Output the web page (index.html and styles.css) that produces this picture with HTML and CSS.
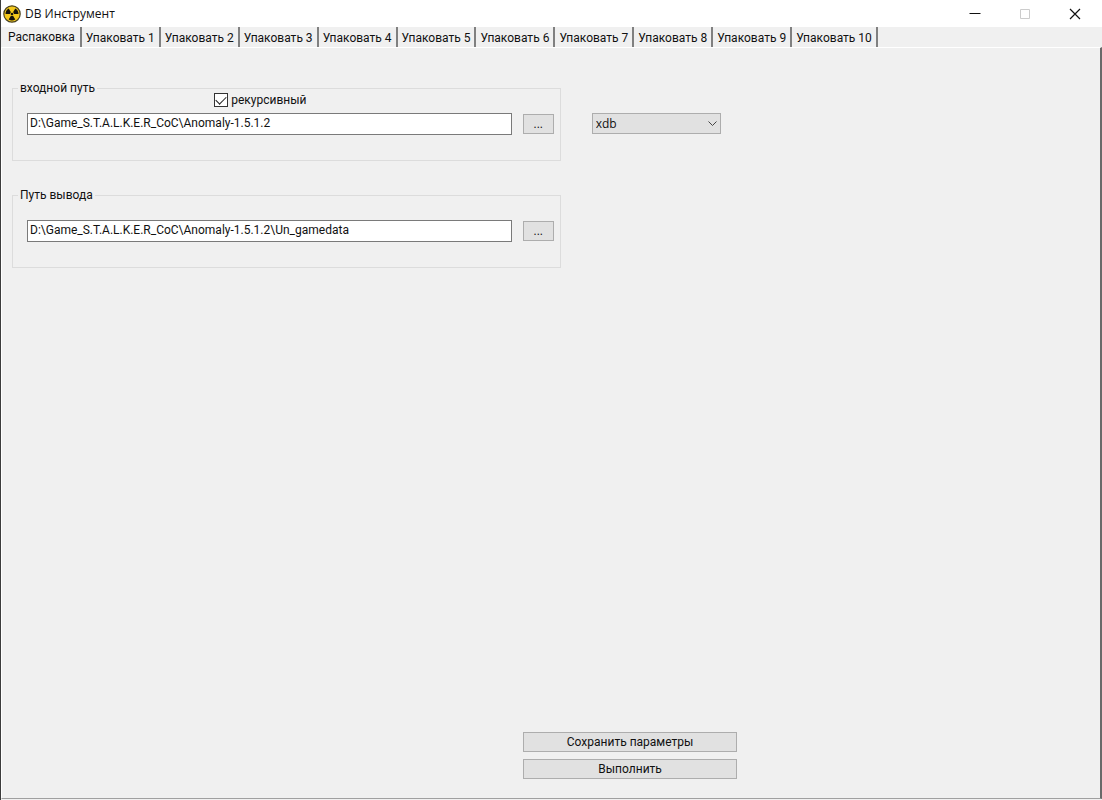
FILE: index.html
```html
<!DOCTYPE html>
<html lang="ru">
<head>
<meta charset="utf-8">
<title>DB Инструмент</title>
<link rel="stylesheet" href="styles.css">
</head>
<body>
<header class="titlebar">
  <svg class="app-icon" viewBox="0 0 18 18" aria-hidden="true">
    <circle cx="9" cy="9" r="8.2" fill="#f3c81c" stroke="#4a421f" stroke-width="1.2"/>
    <path d="M9 9L2.500 9A6.500 6.500 0 0 1 5.700 3.400ZM9 9L12.300 3.400A6.500 6.500 0 0 1 15.500 9ZM9 9L12.300 14.600A6.500 6.500 0 0 1 5.700 14.600Z" fill="#15130b"/>
    <circle cx="9" cy="9" r="2" fill="#f3c81c"/>
    <circle cx="9" cy="9" r="1.3" fill="#15130b"/>
  </svg>
  <h1 class="title">DB Инструмент</h1>
  <div class="window-buttons">
    <button class="window-button" type="button" aria-label="Свернуть"><svg viewBox="0 0 12 12"><path d="M.5 5.500h11" stroke="#111"/></svg></button>
    <button class="window-button" type="button" aria-label="Развернуть" disabled><svg viewBox="0 0 12 12"><path d="M1.500 1.500h9v9h-9z" stroke="#ccc"/></svg></button>
    <button class="window-button" type="button" aria-label="Закрыть"><svg viewBox="0 0 12 12"><path d="M1 1l10 10M11 1L1 11" stroke="#111" stroke-width="1.2"/></svg></button>
  </div>
</header>
<main class="window">
  <nav class="tabs" role="tablist">
    <button class="tab tab-active" type="button" role="tab" aria-selected="true">Распаковка</button>
    <button class="tab" type="button" role="tab">Упаковать 1</button>
    <button class="tab" type="button" role="tab">Упаковать 2</button>
    <button class="tab" type="button" role="tab">Упаковать 3</button>
    <button class="tab" type="button" role="tab">Упаковать 4</button>
    <button class="tab" type="button" role="tab">Упаковать 5</button>
    <button class="tab" type="button" role="tab">Упаковать 6</button>
    <button class="tab" type="button" role="tab">Упаковать 7</button>
    <button class="tab" type="button" role="tab">Упаковать 8</button>
    <button class="tab" type="button" role="tab">Упаковать 9</button>
    <button class="tab" type="button" role="tab">Упаковать 10</button>
  </nav>
  <form class="panel">
    <div class="settings">
      <div class="groups">
        <fieldset class="group">
          <legend class="legend">входной путь</legend>
          <div class="option-row">
            <label class="check"><input class="check-box" type="checkbox" checked>рекурсивный</label>
          </div>
          <div class="path-row">
            <input class="path" type="text" aria-label="входной путь" value="D:\Game_S.T.A.L.K.E.R_CoC\Anomaly-1.5.1.2">
            <button class="button browse" type="button">...</button>
          </div>
        </fieldset>
        <fieldset class="group">
          <legend class="legend">Путь вывода</legend>
          <div class="option-row"></div>
          <div class="path-row">
            <input class="path" type="text" aria-label="Путь вывода" value="D:\Game_S.T.A.L.K.E.R_CoC\Anomaly-1.5.1.2\Un_gamedata">
            <button class="button browse" type="button">...</button>
          </div>
        </fieldset>
      </div>
      <select class="format" aria-label="Формат"><option>xdb</option></select>
    </div>
    <div class="actions">
      <button class="button" type="button">Сохранить параметры</button>
      <button class="button" type="button">Выполнить</button>
    </div>
  </form>
</main>
</body>
</html>
```
FILE: styles.css
```css
* { box-sizing: border-box; }
body {
  margin: 0;
  min-height: 100vh;
  display: flex;
  flex-direction: column;
  background: #f0f0f0;
  border-left: 1px solid #3c3c3c;
  color: #111;
  font: 12px/14px Roboto, Arial, sans-serif;
}
button, input, select { font: inherit; color: inherit; }
.titlebar {
  display: flex;
  align-items: center;
  height: 27px;
  padding: 0 2px;
  background: #fff;
}
.app-icon { width: 18px; height: 18px; }
.title {
  margin: 0 auto 0 4px;
  font: 12px/16px "Open Sans", "Noto Sans", sans-serif;
}
.window-buttons { display: flex; }
.window-button {
  width: 50px;
  height: 26px;
  padding: 0;
  border: 0;
  background: none;
  display: grid;
  place-items: center;
}
.window-button svg { width: 12px; height: 12px; fill: none; }
.window {
  flex: 1;
  display: flex;
  flex-direction: column;
  padding-bottom: 1px;
}
.tabs { display: flex; height: 20px; padding-left: 2px; }
.tab {
  flex: 0 0 auto;
  padding: 2px 4px 0;
  border: 0;
  border-right: 2px solid #808080;
  background: none;
}
.tab-active { padding: 0 5px 1px; }
.panel {
  flex: 1;
  display: flex;
  flex-direction: column;
  justify-content: space-between;
  padding: 33px 12px 19px 10px;
  border: 1px solid #fff;
  border-right: 2px solid #696969;
  border-bottom: 1px solid #a0a0a0;
}
.settings { display: flex; align-items: flex-start; gap: 31px; }
.groups {
  flex: 0 0 51%;
  display: flex;
  flex-direction: column;
  gap: 27px;
}
.group {
  min-width: 0;
  height: 80px;
  margin: 0;
  padding: 0 6px 0 14px;
  border: 1px solid #dcdcdc;
}
.legend { margin-left: -9px; padding: 0 2px; }
.option-row { display: flex; justify-content: center; height: 18px; padding-right: 60px; }
.check {
  display: flex;
  align-items: center;
  gap: 3px;
  height: 14px;
  margin-top: -2px;
}
.check-box {
  appearance: none;
  width: 14px;
  height: 14px;
  margin: 0;
  border: 1px solid #333;
  background: #fff;
  display: grid;
  place-items: center;
}
.check-box:checked::after {
  content: "";
  width: 9px;
  height: 5px;
  margin-bottom: 3px;
  border: solid #222;
  border-width: 0 0 1px 1px;
  rotate: -45deg;
}
.path-row { display: flex; align-items: center; gap: 11px; }
.path {
  flex: 1;
  min-width: 0;
  height: 22px;
  padding: 0 2px 2px;
  border: 1px solid #7a7a7a;
  background: #fff;
}
.button {
  height: 20px;
  padding: 0;
  border: 1px solid #adadad;
  background: #e1e1e1;
}
.browse { width: 31px; }
.format {
  appearance: none;
  width: 129px;
  height: 21px;
  margin-top: 32px;
  padding: 0 3px;
  border: 1px solid #adadad;
  border-radius: 0;
  background: #e1e1e1 url("data:image/svg+xml,%3Csvg xmlns='http://www.w3.org/2000/svg' width='9' height='6'%3E%3Cpath d='M.5.5l4 4 4-4' fill='none' stroke='%23444'/%3E%3C/svg%3E") no-repeat right 3px center;
  font: 12px/16px "Open Sans", sans-serif;
}
.actions {
  display: flex;
  flex-direction: column;
  gap: 7px;
  width: 214px;
  margin-left: 47.5%;
}
```
